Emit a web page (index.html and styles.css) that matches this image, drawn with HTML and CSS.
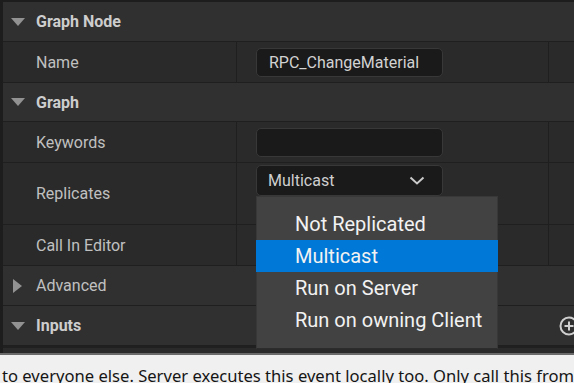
FILE: index.html
```html
<!DOCTYPE html>
<html>
<head>
<meta charset="utf-8">
<link rel="stylesheet" href="styles.css">
</head>
<body>
<div class="panel">
  <div class="cat h39">
    <span class="tri-down"></span><span class="cat-title">Graph Node</span>
  </div>
  <div class="row h40">
    <div class="label">Name</div>
    <div class="value center"><div class="box">RPC_ChangeMaterial</div></div>
    <div class="extra"></div>
  </div>
  <div class="cat h38">
    <span class="tri-down"></span><span class="cat-title">Graph</span>
  </div>
  <div class="row h40">
    <div class="label">Keywords</div>
    <div class="value center"><div class="box"></div></div>
    <div class="extra"></div>
  </div>
  <div class="row h61">
    <div class="label">Replicates</div>
    <div class="value top"><div class="box combo"><span>Multicast</span>
      <svg class="chev" width="16" height="10" viewBox="0 0 16 10"><polyline points="1.5,1.5 8,7.5 14.5,1.5" fill="none" stroke="#c9c9c9" stroke-width="2"/></svg>
    </div></div>
    <div class="extra"></div>
  </div>
  <div class="row h40">
    <div class="label">Call In Editor</div>
    <div class="value"></div>
    <div class="extra"></div>
  </div>
  <div class="cat h39">
    <span class="tri-right"></span><span class="sub-title">Advanced</span>
  </div>
  <div class="cat h39 last">
    <span class="tri-down"></span><span class="cat-title">Inputs</span>
    <svg class="plus" width="22" height="22" viewBox="0 0 22 22"><circle cx="11" cy="11" r="8.5" fill="none" stroke="#cfcfcf" stroke-width="2"/><path d="M11 6.5v9M6.5 11h9" stroke="#cfcfcf" stroke-width="2"/></svg>
  </div>
  <div class="tail"></div>
</div>
<div class="splitter"></div>
<div class="doc">to everyone else. Server executes this event locally too. Only call this from</div>

<div class="popup">
  <div class="item">Not Replicated</div>
  <div class="item sel">Multicast</div>
  <div class="item">Run on Server</div>
  <div class="item">Run on owning Client</div>
</div>
</body>
</html>
```
FILE: styles.css
```css
html, body {
  margin: 0;
  padding: 0;
}
body {
  width: 574px;
  height: 383px;
  overflow: hidden;
  background: #1c1c1c;
  font-family: Roboto, "Noto Sans", sans-serif;
  position: relative;
}
.panel {
  padding: 2px 0 0 3px;
  background: #1d1d1d;
  display: flex;
  flex-direction: column;
}
.cat {
  background: #303030;
  border-bottom: 1px solid #1f1f1f;
  display: flex;
  align-items: center;
  position: relative;
}
.row {
  background: #2a2a2a;
  border-bottom: 1px solid #1f1f1f;
  display: flex;
}
.h38 { height: 38px; }
.h39 { height: 39px; }
.h40 { height: 40px; }
.h61 { height: 61px; }
.tri-down {
  width: 0;
  height: 0;
  margin-left: 8px;
  border-left: 7px solid transparent;
  border-right: 7px solid transparent;
  border-top: 8px solid #929292;
}
.tri-right {
  width: 0;
  height: 0;
  margin-left: 10px;
  margin-right: 4px;
  border-top: 7px solid transparent;
  border-bottom: 7px solid transparent;
  border-left: 9px solid #929292;
}
.cat-title {
  margin-left: 11px;
  font-weight: 700;
  font-size: 16px;
  color: #cdcdcd;
}
.sub-title {
  margin-left: 10px;
  font-size: 16px;
  color: #c0c0c0;
}
.label {
  width: 200px;
  padding-left: 33px;
  border-right: 1px solid #1f1f1f;
  display: flex;
  align-items: center;
  font-size: 16px;
  color: #c0c0c0;
}
.value {
  width: 292px;
  padding-left: 19px;
  border-right: 1px solid #1f1f1f;
  display: flex;
}
.value.center { align-items: center; }
.value.top { align-items: flex-start; padding-top: 2px; }
.extra {
  flex: 1;
}
.box {
  box-sizing: border-box;
  width: 187px;
  height: 29px;
  background: #1a1a1a;
  border: 1px solid #383838;
  border-radius: 5px;
  color: #d2d2d2;
  font-size: 16px;
  padding-left: 12px;
  display: flex;
  align-items: center;
}
.combo {
  height: 31px;
  justify-content: space-between;
  padding-left: 11px;
  padding-right: 17px;
  color: #cfcfcf;
}
.plus {
  position: absolute;
  left: 555px;
  top: 9px;
}
.tail {
  height: 5px;
  background: #2a2a2a;
  border-top: 2px solid #202020;
}
.splitter {
  height: 2px;
  background: #6a6a6a;
}
.doc {
  height: 30px;
  background: #f0f0f0;
  color: #151515;
  font-family: "Noto Sans", "Open Sans", sans-serif;
  font-size: 16.6px;
  line-height: 22px;
  padding: 10px 0 0 2px;
  white-space: nowrap;
  overflow: hidden;
  box-sizing: border-box;
}
.popup {
  position: absolute;
  left: 256px;
  top: 196px;
  width: 242px;
  height: 153px;
  box-sizing: border-box;
  background: #424242;
  border: 1px solid #383838;
  border-bottom-color: #2c2c2c;
  padding-top: 11px;
  display: flex;
  flex-direction: column;
}
.item {
  height: 32px;
  display: flex;
  align-items: center;
  padding-left: 38px;
  font-size: 20px;
  color: #f2f2f2;
}
.item.sel {
  background: #0078d7;
  margin: 0 -1px;
  padding-left: 39px;
}
```
